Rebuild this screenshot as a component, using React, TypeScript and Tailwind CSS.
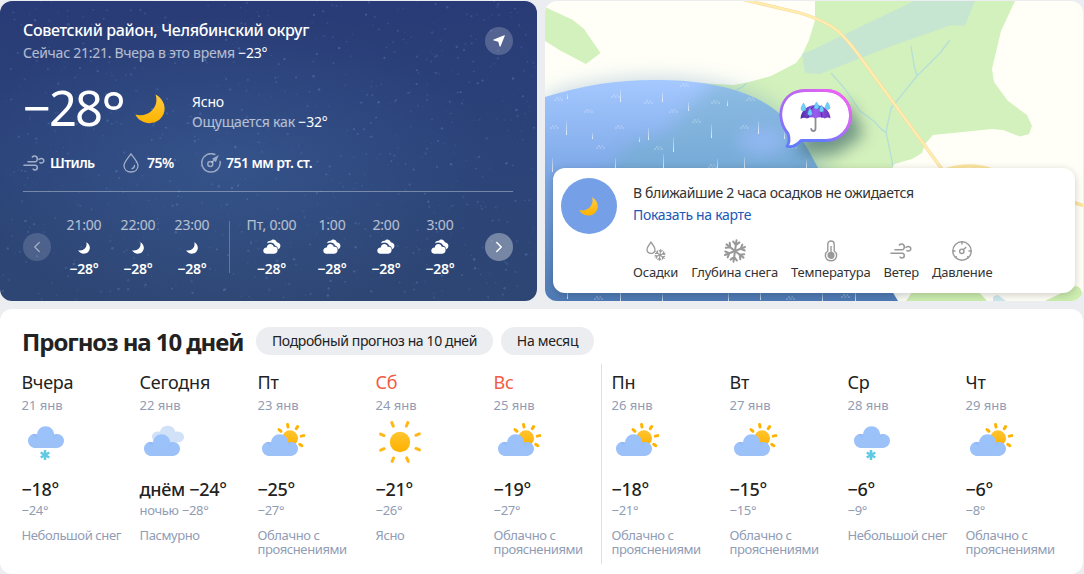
import { FC, ReactNode } from "react";
import { ChevronLeft, ChevronRight } from "lucide-react";

type Weather = "snow" | "overcast" | "partly" | "sunny";

interface Day {
  name: string;
  date: string;
  weather: Weather;
  day: string;
  night: string;
  text: string;
  weekend?: boolean;
}

interface Hour {
  time: string;
  icon: "moon" | "cloud";
  temp: string;
}

const days: Day[] = [
  { name: "Вчера", date: "21 янв", weather: "snow", day: "−18°", night: "−24°", text: "Небольшой снег" },
  { name: "Сегодня", date: "22 янв", weather: "overcast", day: "днём −24°", night: "ночью −28°", text: "Пасмурно" },
  { name: "Пт", date: "23 янв", weather: "partly", day: "−25°", night: "−27°", text: "Облачно с прояснениями" },
  { name: "Сб", date: "24 янв", weather: "sunny", day: "−21°", night: "−26°", text: "Ясно", weekend: true },
  { name: "Вс", date: "25 янв", weather: "partly", day: "−19°", night: "−27°", text: "Облачно с прояснениями", weekend: true },
  { name: "Пн", date: "26 янв", weather: "partly", day: "−18°", night: "−21°", text: "Облачно с прояснениями" },
  { name: "Вт", date: "27 янв", weather: "partly", day: "−15°", night: "−15°", text: "Облачно с прояснениями" },
  { name: "Ср", date: "28 янв", weather: "snow", day: "−6°", night: "−9°", text: "Небольшой снег" },
  { name: "Чт", date: "29 янв", weather: "partly", day: "−6°", night: "−8°", text: "Облачно с прояснениями" },
];

const tonight: Hour[] = [
  { time: "21:00", icon: "moon", temp: "−28°" },
  { time: "22:00", icon: "moon", temp: "−28°" },
  { time: "23:00", icon: "moon", temp: "−28°" },
];

const tomorrow: Hour[] = [
  { time: "Пт, 0:00", icon: "cloud", temp: "−28°" },
  { time: "1:00", icon: "cloud", temp: "−28°" },
  { time: "2:00", icon: "cloud", temp: "−28°" },
  { time: "3:00", icon: "cloud", temp: "−28°" },
];

// simple seeded generator so the sky is the same on every render
const makeStars = (count: number) => {
  let seed = 7;
  const next = () => {
    seed = (seed * 16807) % 2147483647;
    return seed / 2147483647;
  };
  return Array.from({ length: count }, () => ({
    x: next() * 537,
    y: next() * 300,
    r: 0.5 + next() * 0.8,
    o: 0.05 + next() * 0.25,
  }));
};

const stars = makeStars(900);

const Moon: FC<{ className: string; fill: string }> = ({ className, fill }) => (
  <svg className={className} viewBox="0 0 30 30">
    <defs>
      <linearGradient id="moonGold" x1="0" y1="0" x2="0" y2="1">
        <stop offset="0" stopColor="#ffcb3d" />
        <stop offset="1" stopColor="#ffb300" />
      </linearGradient>
    </defs>
    <path d="M20.6 .4C31 6 32.500 18.500 24.600 25.600C17 32 4.500 29.500 .4 20.600C6 22.300 13 20.800 17.200 16.300C21.500 11.500 22.300 6 20.600 .4Z" fill={fill} />
  </svg>
);

const SmallCloud = () => (
  <svg className="h-4 w-4.5" viewBox="0 0 18 16" fill="#fff">
    <path d="M4 4.300C4.800 2 6.700 1.500 8 1.800C9 -.1 12.800 -.2 13.800 3.200C16.500 3.500 18 5.800 17.200 8.100C16.900 9.200 16 10 15 10.200C14.900 8.200 13.600 6.900 12 6.600C11 3.700 7.500 2.500 4 4.300Z" />
    <path d="M3.800 8.500C4.100 4.200 10 4 10.700 7.800C13.800 7.300 15.200 9.700 14.500 12C14 13.700 12.800 14.700 11 14.700H3C1.200 14.700 .3 13.300 .3 11.600C.3 9.800 1.700 8.300 3.800 8.500Z" />
  </svg>
);

const WindIcon: FC<{ className?: string }> = ({ className }) => (
  <svg className={className} width="22" height="18" viewBox="0 0 22 18" fill="none" stroke="currentColor" strokeWidth="1.600" strokeLinecap="round">
    <path d="M5 7.800H12C15.200 7.800 15.200 2 11.500 2C10.500 2 9.800 2.400 9.400 3" />
    <path d="M1 11.200H12.200C15 11.200 15 16 12 16C11.200 16 10.500 15.700 10.200 15.200" />
    <path d="M16 5.400C18.500 3.600 21 5 20.800 7C20.600 9 18.300 9.400 17 8.600" />
  </svg>
);

const DropIcon: FC<{ className?: string }> = ({ className }) => (
  <svg className={className} width="16" height="20" viewBox="0 0 16 20" fill="none" stroke="currentColor" strokeWidth="1.300" strokeLinecap="round">
    <path d="M8 .9C6 3.800 1 9 1 12.500C1 16.500 4 19 8 19S15 16.500 15 12.500C15 9 10 3.800 8 .9Z" />
    <path d="M11.500 12.500C11.500 14.200 10.300 15.300 9 15.600" />
  </svg>
);

const PressureIcon: FC<{ className?: string }> = ({ className }) => (
  <svg className={className} width="20" height="20" viewBox="0 0 20 20" fill="none" stroke="currentColor" strokeWidth="1.500" strokeLinecap="round">
    <path d="M13.800 1.500A9.200 9.200 0 1 0 19.100 8.500" />
    <circle cx="9.300" cy="11" r="2.500" />
    <path d="M11 9.200L16 4.200M12.300 6L16.300 3.700L14.600 8Z" />
  </svg>
);

const GaugeIcon = () => (
  <svg width="20" height="20" viewBox="0 0 20 20" fill="none" stroke="#999" strokeWidth="1.400" strokeLinecap="round">
    <circle cx="10" cy="10" r="9.200" />
    <circle cx="9.800" cy="10.300" r="2.200" />
    <path d="M11.500 8.600L13.800 6.400M10 1V3M1 10H3M17 10H19M4.300 15.700L3.600 16.400M15.700 15.700L16.400 16.400" />
  </svg>
);

const Flake: FC<{ size: number; width: number }> = ({ size, width }) => (
  <svg width={size} height={size} viewBox="0 0 24 24" fill="none" stroke="#999" strokeWidth={width} strokeLinecap="round">
    {[8, 68, 128, 188, 248, 308].map((a) => (
      <path key={a} transform={`rotate(${a} 12 12)`} d="M12 12V1.200M8.800 2.800L12 6L15.200 2.800" />
    ))}
  </svg>
);

const ThermometerIcon = () => (
  <svg width="14" height="22" viewBox="0 0 14 22" fill="none" stroke="#999" strokeWidth="1.400">
    <path d="M3.800 11V4.200C3.800 0 10.200 0 10.200 4.200V11C14.500 14 12.700 20.800 7 20.800S-.5 14 3.800 11Z" />
    <circle cx="7" cy="15.300" r="2.900" fill="#999" />
    <path d="M7 6V15" />
  </svg>
);

const WeatherIcon: FC<{ weather: Weather }> = ({ weather }) => {
  const cloud = "M9 14.500C9.600 9.800 13 6.500 17.700 6.500C22.300 6.500 25.500 9.600 26.300 14.700C27.300 14.100 28.500 14 29.800 14.200C33.500 14.700 36 17.300 36 20.800C36 24.800 33 28.200 28.800 28.200H7.800C3.400 28.200 0 25 0 20.600C0 16.300 4.200 12.900 9 14.500Z";
  return (
    <svg className="h-11 w-12" viewBox="0 0 48 44">
      <defs>
        <linearGradient id="cloudBlue" x1="0" y1="0" x2="0" y2="1">
          <stop offset="0" stopColor="#9cc2fc" />
          <stop offset="1" stopColor="#9bc1f7" />
        </linearGradient>
        <linearGradient id="cloudShade" x1="0" y1="0" x2="1" y2="1">
          <stop offset="0" stopColor="#86a9eb" stopOpacity=".6" />
          <stop offset="1" stopColor="#9bc1f7" stopOpacity="0" />
        </linearGradient>
        <linearGradient id="sunGold" x1="0" y1="0" x2="0" y2="1">
          <stop offset="0" stopColor="#ffc530" />
          <stop offset="1" stopColor="#ffb100" />
        </linearGradient>
      </defs>
      {weather === "sunny" && (
        <g transform="translate(0 -1)">
          <circle cx="24" cy="22" r="10.200" fill="url(#sunGold)" />
          {[22, 67, 112, 157, 202, 247, 292, 337].map((a) => (
            <path key={a} d="M24 4.800V1" transform={`rotate(${a} 24 22)`} stroke="#ffb71a" strokeWidth="3" strokeLinecap="round" />
          ))}
        </g>
      )}
      {weather === "partly" && (
        <g transform="translate(0 -.5)">
          <circle cx="32" cy="17.800" r="8" fill="url(#sunGold)" />
          {[-52, -10, 33, 79, 122].map((a) => (
            <path key={a} d="M32 6.300V3.800" transform={`rotate(${a} 32 17.800)`} stroke="#ffb300" strokeWidth="3" strokeLinecap="round" />
          ))}
        </g>
      )}
      {weather === "overcast" && <path d={cloud} transform="translate(12 -.3) scale(.89 .77)" fill="#d1e2f8" />}
      {weather !== "sunny" && (
        <g transform={weather === "snow" ? "translate(6 -1.200)" : "translate(4 6.800)"}>
          <path d={cloud} fill="url(#cloudBlue)" />
          <path d="M9 14C9 17 10 20 11.500 22.500L4 14.500C5.500 13.800 7.200 13.700 9 14.500Z" fill="url(#cloudShade)" />
          <path d="M26.300 14.700C26.300 16.500 25 18.500 24 20L28.500 16L29.500 14.200C28.500 14 27.300 14.100 26.300 14.700Z" fill="url(#cloudShade)" />
        </g>
      )}
      {weather === "snow" && (
        <g stroke="#62c9e3" strokeWidth="2.500" transform="translate(23 34)">
          <path d="M0 -5V5M-4.300 -2.500L4.300 2.500M-4.300 2.500L4.300 -2.500" />
        </g>
      )}
    </svg>
  );
};

const HourItem: FC<{ hour: Hour; wide?: boolean }> = ({ hour, wide }) => (
  <div className={`flex flex-col items-center ${wide ? "w-[67px]" : "w-[54px]"}`}>
    <span className="whitespace-nowrap text-sm leading-5.5 text-white/65 tracking-[-0.2px]">{hour.time}</span>
    <div className="flex h-5.5 items-center justify-center">
      {hour.icon === "moon" ? <Moon className="mt-0.5 h-3 w-3" fill="#fff" /> : <SmallCloud />}
    </div>
    <span className="text-sm font-semibold leading-5.5 tracking-[-0.2px]">{hour.temp}</span>
  </div>
);

const CurrentWeather = () => (
  <section className="relative h-[300px] w-[537px] overflow-hidden rounded-xl bg-linear-to-b from-[#293b76] via-[#2b4379] to-[#2e4673] text-white">
    <svg className="absolute inset-0" width="537" height="300">
      <defs>
        <radialGradient id="milky" cx=".42" cy=".55" r=".5">
          <stop offset="0" stopColor="#4770aa" stopOpacity=".35" />
          <stop offset="1" stopColor="#4770aa" stopOpacity="0" />
        </radialGradient>
      </defs>
      <rect width="537" height="300" fill="url(#milky)" />
      {stars.map((s, i) => (
        <circle key={i} cx={s.x} cy={s.y} r={s.r} fill="#7d9fe6" opacity={s.o} />
      ))}
    </svg>
    <div className="relative flex h-full flex-col pr-6 pl-[23px] pt-[18px]">
      <div className="flex justify-between">
        <div>
          <h1 className="text-base font-medium leading-[23px] tracking-[-0.35px]">Советский район, Челябинский округ</h1>
          <p className="text-sm leading-[22px] tracking-[-0.25px] text-white/65">
            Сейчас 21:21. Вчера в это время <span className="text-white">−23°</span>
          </p>
        </div>
        <div className="mt-2 flex size-7 items-center justify-center rounded-full bg-white/20">
          <svg width="12" height="12" viewBox="0 0 12 12" fill="#fff">
            <path d="M11.300 .2Q12 0 11.800 .7L7.600 11.300Q7 12.300 6.500 11.200L5.300 6.700L.8 5.500Q-.3 5 .7 4.400Z" />
          </svg>
        </div>
      </div>
      <div className="mt-[19px] flex h-[50px] items-center">
        <span className="-mt-0.5 h-[50px] w-[112px] whitespace-nowrap text-[49px] leading-[50px] tracking-[-2px]">
          −28<span className="align-[-8px] text-[59px] leading-0">°</span>
        </span>
        <Moon className="mt-0.5 size-[30px]" fill="url(#moonGold)" />
        <div className="ml-[27px] mt-2 text-sm leading-5 tracking-[-0.2px]">
          <p>Ясно</p>
          <p className="text-white/65">
            Ощущается как <span className="text-white">−32°</span>
          </p>
        </div>
      </div>
      <div className="mt-[18px] flex h-6 items-center text-sm font-semibold tracking-[-0.55px]">
        <WindIcon className="text-white/55" />
        <span className="ml-[5px] w-[73px]">Штиль</span>
        <DropIcon className="text-white/55" />
        <span className="ml-2 w-[54px]">75%</span>
        <PressureIcon className="text-white/50" />
        <span className="ml-[5px]">751 мм рт. ст.</span>
      </div>
      <div className="mt-4 h-px w-[490px] bg-white/35" />
      <div className="mt-[22px] flex items-center">
        <button className="flex size-7 items-center justify-center rounded-full bg-white/15">
          <ChevronLeft size={18} strokeWidth={1.6} className="text-white/50" />
        </button>
        <div className="ml-1.5 flex">
          {tonight.map((h) => (
            <HourItem key={h.time} hour={h} />
          ))}
        </div>
        <div className="mr-2 ml-2.5 h-[52px] w-px bg-white/25" />
        <div className="flex">
          {tomorrow.map((h, i) => (
            <HourItem key={h.time} hour={h} wide={i === 0} />
          ))}
        </div>
        <button className="ml-auto flex size-7 items-center justify-center rounded-full bg-white/35">
          <ChevronRight size={18} strokeWidth={2} />
        </button>
      </div>
    </div>
  </section>
);

const drops = [
  [567, 94, 5], [620, 89, 13], [662, 92, 10], [688, 102, 9], [566, 121, 14], [592, 133, 6], [648, 128, 12],
  [673, 137, 15], [711, 124, 14], [727, 100, 6], [758, 121, 13], [552, 158, 14], [615, 158, 11], [663, 154, 14],
  [717, 159, 10], [744, 157, 12], [806, 159, 9], [639, 137, 5], [784, 132, 7], [567, 290, 9], [620, 289, 12],
  [662, 294, 7], [728, 293, 8], [760, 291, 9], [822, 293, 8], [855, 290, 11],
];

const splashes = [
  [558, 99], [588, 111], [615, 96], [648, 102], [673, 111], [684, 85], [696, 121], [715, 102], [750, 99],
  [600, 147], [658, 148], [792, 147], [712, 166], [554, 127], [619, 127], [744, 127], [598, 298], [790, 298], [845, 296],
];

const RainMap = () => (
  <svg className="absolute inset-0" width="538" height="300" viewBox="545 1 538 300">
    <defs>
      <linearGradient id="rain" x1="0" y1="80" x2="0" y2="301" gradientUnits="userSpaceOnUse">
        <stop offset="0" stopColor="#a5c8ff" />
        <stop offset=".4" stopColor="#7faae8" />
        <stop offset="1" stopColor="#4e7ab4" />
      </linearGradient>
      <linearGradient id="drop" x1="0" y1="0" x2="0" y2="1">
        <stop offset="0" stopColor="#fff" stopOpacity=".15" />
        <stop offset="1" stopColor="#fff" stopOpacity=".75" />
      </linearGradient>
      <linearGradient id="bubble" x1="800" y1="89" x2="806" y2="148" gradientUnits="userSpaceOnUse">
        <stop offset="0" stopColor="#bd67ef" />
        <stop offset="1" stopColor="#5b7dff" />
      </linearGradient>
      <linearGradient id="bubblePink" x1="800" y1="140" x2="850" y2="105" gradientUnits="userSpaceOnUse">
        <stop offset=".3" stopColor="#f45ff5" stopOpacity="0" />
        <stop offset="1" stopColor="#ef62f6" />
      </linearGradient>
      <linearGradient id="umbrella" x1="0" y1="0" x2="1" y2="0">
        <stop offset="0" stopColor="#4a2aa5" />
        <stop offset=".5" stopColor="#9d5cf0" />
        <stop offset="1" stopColor="#6a35bd" />
      </linearGradient>
      <filter id="soft" x="-30%" y="-30%" width="160%" height="160%">
        <feGaussianBlur stdDeviation="11" />
      </filter>
      <filter id="softer" x="-50%" y="-50%" width="200%" height="200%">
        <feGaussianBlur stdDeviation="8" />
      </filter>
      <clipPath id="rainClip">
        <path d="M545 97C585 84 625 79 663 80C712 81 755 91 781 115C800 133 808 149 818 168L898 301H545Z" />
      </clipPath>
    </defs>
    <rect x="545" y="1" width="538" height="300" fill="#fffff7" />
    <path d="M545 7L573 20L584 29L600.500 53L586 64L561 51L545 41Z" fill="#d3f1bc" />
    <path d="M815 1V20L809 40L802 55L796 63L771 76L745 83L733 85L700 83V200H893V164.500L912 159L922 153L925 144L933 135L992 129L1003 130L1020 136.500L1029 134L1032 126L1027 115L1008 101L994 82L992 69L1001 31L1015 1Z" fill="#d3f1bc" />
    <path d="M914 1H975L965 25.500H950L889 47L820 74L805 73L802 54L812 50Z" fill="#c6e6d2" />
    <path d="M906 301L913 291H978L987 301ZM1045 301L1076 286Q1083 287 1083 301Z" fill="#cdeeb0" />
    <path d="M993 301Q992 295 998 295L1006 301Z" fill="#cfe8ef" />
    <g fill="none" stroke="#b5dfd7" strokeWidth="1.300">
      <path d="M831 73L845 89L860 111L875 122Q882 131 886 132" />
      <path d="M950 40L940 53L917 76L891 108L886 132L893 166" />
      <path d="M911 46L914 65L917 76M736 90Q743 88 746 83" />
    </g>
    <g fill="none" strokeLinecap="round">
      <path d="M745 0L800 13Q830 22 842 35Q850 43 858 54L944 172" stroke="#f8dca0" strokeWidth="3.200" />
      <path d="M745 0L800 13Q830 22 842 35Q850 43 858 54L944 172" stroke="#ffeeb0" strokeWidth="2" />
      <path d="M945 170Q970 162 992 170M1072 202L1085 206" stroke="#fce6a0" strokeWidth="3.500" />
    </g>
    <path d="M545 97C585 84 625 79 663 80C712 81 755 91 781 115C800 133 808 149 818 168L898 301H545Z" fill="#5d8dbb" opacity=".4" filter="url(#soft)" />
    <g clipPath="url(#rainClip)">
      <rect x="545" y="79" width="360" height="225" fill="url(#rain)" />
      <path d="M715 80Q700 100 680 115Q670 140 635 140Q620 155 600 185H850L790 90Z" fill="#6dadbe" opacity=".42" filter="url(#softer)" />
      <ellipse cx="762" cy="141" rx="24" ry="14" fill="#9dbcff" opacity=".6" filter="url(#softer)" />
      <g fill="url(#drop)">
        {drops.map(([x, y, h], i) => (
          <rect key={i} x={x} y={y} width="1" height={h} />
        ))}
      </g>
      <g stroke="#fff" opacity=".4" strokeDasharray="2 1.500" fill="none">
        {splashes.map(([x, y], i) => (
          <path key={i} d={`M${x - 4} ${y + 1}H${x + 5}M${x - 2} ${y - 1}H${x + 3}`} />
        ))}
      </g>
    </g>
    <path d="M806 105H850L864 135L835 155H800Z" fill="#315c60" opacity=".6" filter="url(#softer)" />
    {["url(#bubble)", "url(#bubblePink)"].map((stroke, i) => (
      <path key={i} d="M806 90.500H826C840 90.500 850.500 102 850.500 115.500S840 140.500 826 140.500H801C797 145 792 147.500 787 146.500C790 142 789.500 138 788 133.500C775 119 779 90.500 806 90.500Z" fill={i ? "none" : "#fff"} stroke={stroke} strokeWidth="2.800" strokeLinejoin="round" />
    ))}
    <path d="M815.500 117V128.500Q815.500 131 813.500 131Q811.500 131 811.200 128.800" fill="none" stroke="#8d8d98" strokeWidth="1.800" strokeLinecap="round" />
    <path d="M800.500 119C801 110 808 105 815.500 105S830 110 830.500 118.500Q827.500 116.500 825 118.500Q820 116 815.500 118.500Q811 116 807 118.500Q803 117 800.500 119Z" fill="url(#umbrella)" />
    <path d="M808 118Q808 110 815 105.500M822 118Q822 110 816 105.500" fill="none" stroke="#3a1a8c" strokeWidth=".8" />
    <g fill="#6fd0f8" stroke="#3aa5dd" strokeWidth=".4">
      <path d="M803.500 103Q798.500 111 803.500 111T803.500 103Z" />
      <path d="M810 108Q805.500 115.500 810 115.500T810 108Z" />
      <path d="M816.500 102Q811.500 109 816.500 109T816.500 102Z" />
      <path d="M821.500 105Q817 112 821.500 112T821.500 105Z" />
      <path d="M827.500 102Q822.500 109.500 827.500 109.500T827.500 102Z" />
    </g>
  </svg>
);

const Layer: FC<{ label: string; children: ReactNode }> = ({ label, children }) => (
  <div className="flex flex-col items-center">
    <div className="flex h-6 items-center justify-center">{children}</div>
    <span className="text-[13px] leading-[18px] tracking-[-0.2px]">{label}</span>
  </div>
);

const MapCard = () => (
  <section className="relative flex h-[300px] w-[538px] items-end overflow-hidden rounded-xl px-2 pb-2">
    <RainMap />
    <div className="relative flex h-[125px] w-full rounded-xl bg-white px-2 pt-2.5 text-[#333] shadow-[0_2px_8px_rgba(0,0,0,0.2)]">
      <div className="flex size-14 items-center justify-center rounded-full bg-[#759fe6]">
        <Moon className="mr-0.5 size-[19px]" fill="url(#moonGold)" />
      </div>
      <div className="ml-4 pt-1 whitespace-nowrap">
        <p className="text-sm leading-[22px] tracking-[-0.35px]">В ближайшие 2 часа осадков не ожидается</p>
        <a className="block text-sm leading-[22px] tracking-[-0.3px] text-[#2058b8]">Показать на карте</a>
        <div className="mt-[13px] flex gap-[13px]">
          <Layer label="Осадки">
            <span className="flex">
              <svg width="10" height="14" viewBox="0 0 10 14" fill="none" stroke="#999" strokeWidth="1.300">
                <path d="M5 1.200C3.500 3.500 1 6 1 8.500C1 11 2.800 12.300 5 12.300S9 11 9 8.500C9 6 6.500 3.500 5 1.200Z" />
              </svg>
              <span className="-ml-1 pt-2 pl-0.5">
                <Flake size={12} width={2.2} />
              </span>
            </span>
          </Layer>
          <Layer label="Глубина снега">
            <Flake size={24} width={2} />
          </Layer>
          <Layer label="Температура">
            <ThermometerIcon />
          </Layer>
          <Layer label="Ветер">
            <WindIcon className="text-[#999]" />
          </Layer>
          <Layer label="Давление">
            <GaugeIcon />
          </Layer>
        </div>
      </div>
    </div>
  </section>
);

const DayColumn: FC<{ item: Day }> = ({ item }) => (
  <div className="w-[118px] shrink-0 whitespace-nowrap">
    <p className={`text-lg leading-6 tracking-[-0.2px] ${item.weekend ? "text-[#f35b45]" : "text-[#222]"}`}>{item.name}</p>
    <p className="mt-px text-[13px] leading-5 text-[#919cb5]">{item.date}</p>
    <div className="mt-1.5 h-14 pl-[0.5px]">
      <WeatherIcon weather={item.weather} />
    </div>
    <p className="text-lg font-medium leading-6 tracking-[-0.3px] text-[#222]">{item.day}</p>
    <p className="text-[13px] leading-[18px] tracking-[-0.3px] text-[#919cb5]">{item.night}</p>
    <p className="mt-[9px] w-[106px] text-[13px] leading-[14px] tracking-[-0.4px] whitespace-normal text-[#919cb5]">{item.text}</p>
  </div>
);

const Forecast = () => (
  <section className="h-[266px] w-[1083px] overflow-hidden rounded-xl bg-white pl-[21.5px] pt-[18px]">
    <div className="flex h-7 items-center whitespace-nowrap pl-[0.5px]">
      <h2 className="w-[234px] pt-0.5 text-2xl font-bold leading-8 tracking-[-1.05px] text-[#222]">Прогноз на 10 дней</h2>
      <button className="h-7 w-[237px] rounded-full bg-[#ecedf1] text-sm tracking-[-0.38px] text-[#222]">Подробный прогноз на 10 дней</button>
      <button className="ml-2 h-7 w-[93px] rounded-full bg-[#ecedf1] text-sm tracking-[-0.3px] text-[#222]">На месяц</button>
    </div>
    <div className="mt-[9px] flex h-[200px]">
      <div className="flex w-[579.5px] pt-1.5">
        {days.slice(0, 5).map((d) => (
          <DayColumn key={d.date} item={d} />
        ))}
      </div>
      <div className="flex border-l border-[#dfe0e4] pl-[9.5px] pt-1.5">
        {days.slice(5).map((d) => (
          <DayColumn key={d.date} item={d} />
        ))}
      </div>
    </div>
  </section>
);

const App = () => {
  return (
    <main className="flex h-[574px] w-[1084px] flex-col gap-2 overflow-hidden bg-[#ecedf1] pt-px font-['Noto_Sans',sans-serif]">
      <div className="flex gap-2">
        <CurrentWeather />
        <MapCard />
      </div>
      <Forecast />
    </main>
  );
};

export default App;
